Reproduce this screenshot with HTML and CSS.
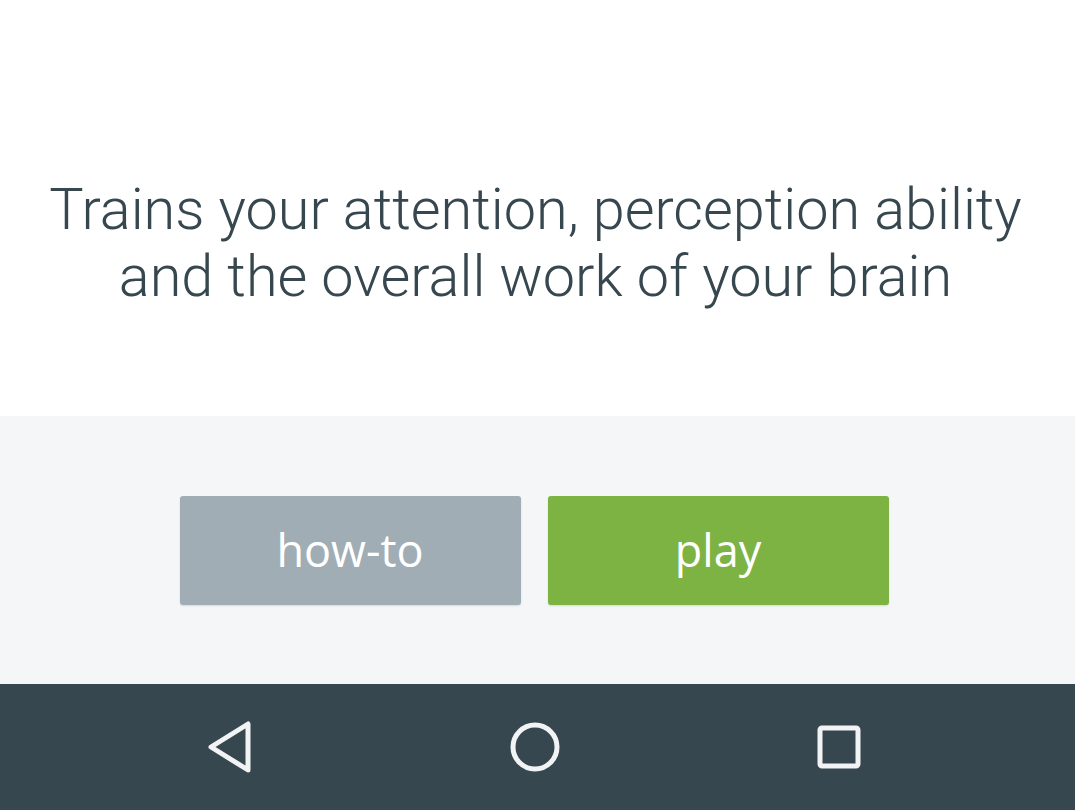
FILE: index.html
```html
<!DOCTYPE html>
<html>
<head>
<meta charset="utf-8">
<link rel="stylesheet" href="styles.css">
</head>
<body>
<div class="screen">
  <section class="hero">
    <p class="desc">Trains your attention, perception ability<br>and the overall work of your brain</p>
  </section>
  <section class="actions">
    <button class="btn btn-howto">how-to</button>
    <button class="btn btn-play">play</button>
  </section>
  <nav class="navbar">
    <svg class="nav-icon" width="50" height="54" viewBox="0 0 50 54"><path d="M42 4 L42 50 L5 27 Z" fill="none" stroke="#f1f3f4" stroke-width="5" stroke-linejoin="round"/></svg>
    <svg class="nav-icon" width="52" height="52" viewBox="0 0 52 52"><circle cx="26" cy="26" r="22" fill="none" stroke="#f1f3f4" stroke-width="5"/></svg>
    <svg class="nav-icon" width="46" height="46" viewBox="0 0 46 46"><rect x="4" y="4" width="38" height="38" rx="2" fill="none" stroke="#f1f3f4" stroke-width="5"/></svg>
  </nav>
</div>
</body>
</html>
```
FILE: styles.css
```css
html, body {
  margin: 0;
  padding: 0;
}
body {
  width: 1075px;
  height: 810px;
  overflow: hidden;
  background: #ffffff;
}
.screen {
  display: flex;
  flex-direction: column;
  height: 810px;
}
.hero {
  height: 416px;
  box-sizing: border-box;
  padding-top: 70px;
  padding-right: 4px;
  background: #ffffff;
  display: flex;
  align-items: center;
  justify-content: center;
}
.desc {
  margin: 0;
  font-family: Roboto, "Liberation Sans", sans-serif;
  font-weight: 300;
  font-size: 57.6px;
  line-height: 67px;
  color: #37474f;
  text-align: center;
}
.actions {
  height: 268px;
  background: #f4f6f7;
  display: flex;
  justify-content: center;
  align-items: center;
  gap: 27px;
  box-sizing: border-box;
  padding-right: 7px;
}
.btn {
  width: 341px;
  height: 109px;
  border: none;
  border-radius: 3px;
  font-family: "Open Sans", "Noto Sans", sans-serif;
  font-size: 45px;
  color: #ffffff;
  padding: 0 0 2px;
  box-shadow: 0 1px 2px rgba(0,0,0,0.12);
}
.btn-howto {
  background: #a1adb5;
}
.btn-play {
  background: #7cb342;
}
.navbar {
  height: 126px;
  box-sizing: border-box;
  padding-right: 8px;
  background: #37474f;
  display: flex;
  align-items: center;
  justify-content: center;
}
.nav-icon {
  display: block;
}
.nav-icon:nth-child(1) { margin-right: 253px; }
.nav-icon:nth-child(2) { margin-right: 255px; }
```
